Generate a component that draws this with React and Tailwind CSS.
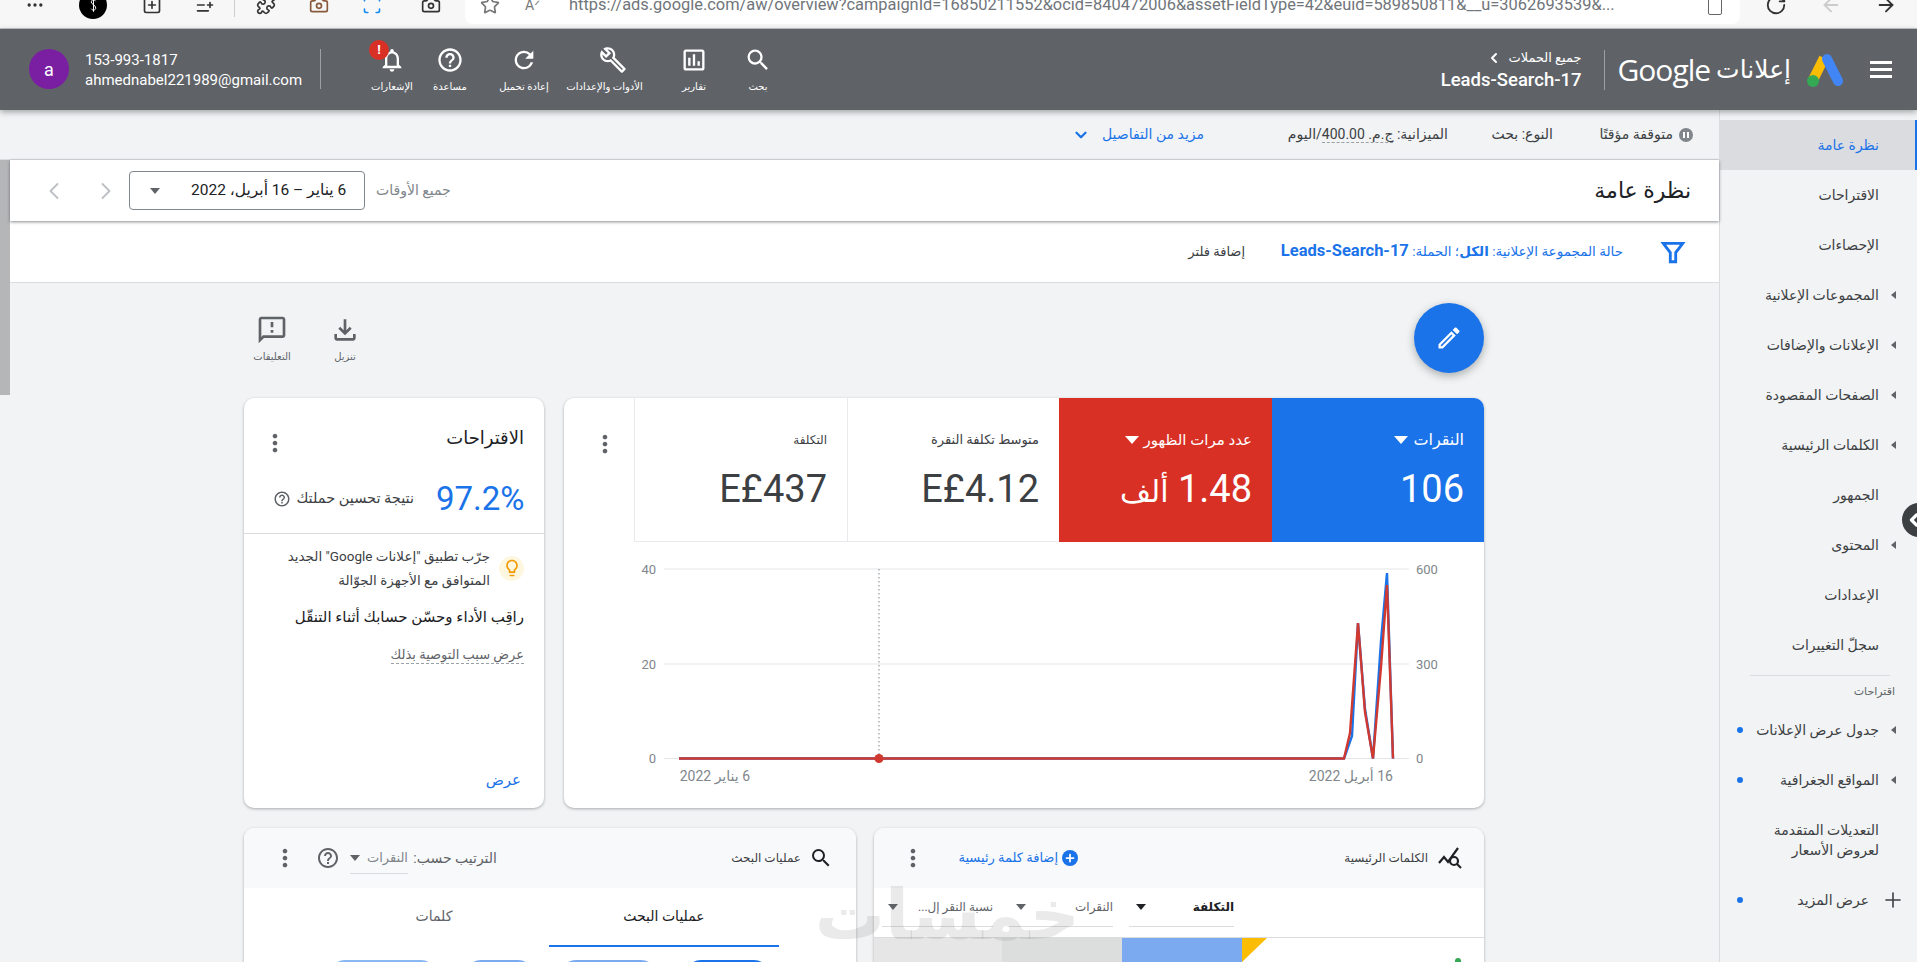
import React from "react";
import { Ellipsis, SquarePlus, ListPlus, Puzzle, Camera, Scan, RotateCw, ArrowLeft, ArrowRight, Star, ChevronLeft, ChevronRight, ChevronDown, Plus } from "lucide-react";

const P = {
  search: "M15.5 14h-.79l-.28-.27A6.471 6.471 0 0 0 16 9.5 6.5 6.5 0 1 0 9.5 16c1.61 0 3.09-.59 4.23-1.57l.27.28v.79l5 4.99L20.49 19l-4.99-5zm-6 0C7.01 14 5 11.99 5 9.5S7.01 5 9.5 5 14 7.01 14 9.5 11.99 14 9.5 14z",
  report: "M19 3H5c-1.1 0-2 .9-2 2v14c0 1.1.9 2 2 2h14c1.1 0 2-.9 2-2V5c0-1.1-.9-2-2-2zm0 16H5V5h14v14zM7 10h2v7H7zm4-3h2v10h-2zm4 6h2v4h-2z",
  wrench: "M22.61 18.99l-9.08-9.08c.93-2.34.45-5.1-1.44-7C9.79.61 6.21.4 3.66 2.25L7.5 6.1 6.08 7.5 2.25 3.67C.39 6.21.61 9.79 2.91 12.08c1.86 1.86 4.57 2.35 6.88 1.48l9.11 9.11c.39.39 1.02.39 1.41 0l2.3-2.3c.4-.38.4-1.01 0-1.38zm-3 1.6l-9.46-9.46c-.61.45-1.29.72-2 .82-1.36.2-2.79-.21-3.83-1.25C3.37 9.76 2.93 8.5 3 7.26l3.09 3.09 4.24-4.24-3.09-3.09c1.24-.07 2.49.37 3.44 1.31 1.08 1.08 1.49 2.57 1.24 3.96-.12.71-.42 1.37-.88 1.96l9.45 9.45-.88.89z",
  refresh: "M17.65 6.35A7.958 7.958 0 0 0 12 4c-4.42 0-7.99 3.58-7.99 8s3.57 8 7.99 8c3.73 0 6.84-2.55 7.73-6h-2.08A5.99 5.99 0 0 1 12 18c-3.31 0-6-2.69-6-6s2.69-6 6-6c1.66 0 3.14.69 4.22 1.78L13 11h7V4l-2.35 2.35z",
  help: "M11 18h2v-2h-2v2zm1-16C6.48 2 2 6.48 2 12s4.48 10 10 10 10-4.48 10-10S17.52 2 12 2zm0 18c-4.41 0-8-3.59-8-8s3.59-8 8-8 8 3.59 8 8-3.59 8-8 8zm0-14c-2.21 0-4 1.79-4 4h2c0-1.1.9-2 2-2s2 .9 2 2c0 2-3 1.75-3 5h2c0-2.25 3-2.5 3-5 0-2.21-1.79-4-4-4z",
  bell: "M12 22c1.1 0 2-.9 2-2h-4c0 1.1.89 2 2 2zm6-6v-5c0-3.07-1.64-5.64-4.5-6.32V4c0-.83-.67-1.5-1.5-1.5s-1.5.67-1.5 1.5v.68C7.63 5.36 6 7.92 6 11v5l-2 2v1h16v-1l-2-2zm-2 1H8v-6c0-2.48 1.51-4.5 4-4.5s4 2.02 4 4.5v6z",
  edit: "M14.06 9.02l.92.92L5.92 19H5v-.92l9.06-9.06M17.66 3c-.25 0-.51.1-.7.29l-1.83 1.83 3.75 3.75 1.83-1.83c.39-.39.39-1.02 0-1.41l-2.34-2.34c-.2-.2-.45-.29-.71-.29zm-3.6 3.19L3 17.25V21h3.75L17.81 9.94l-3.75-3.75z",
  feedback: "M20 2H4c-1.1 0-1.99.9-1.99 2L2 22l4-4h14c1.1 0 2-.9 2-2V4c0-1.1-.9-2-2-2zm0 14H5.17L4 17.17V4h16v12zm-9-4h2v2h-2zm0-6h2v4h-2z",
  download: "M18 15v3H6v-3H4v3c0 1.1.9 2 2 2h12c1.1 0 2-.9 2-2v-3h-2zm-1-4l-1.41-1.41L13 12.17V4h-2v8.17L8.41 9.59 7 11l5 5 5-5z",
  kebab: "M12 8c1.1 0 2-.9 2-2s-.9-2-2-2-2 .9-2 2 .9 2 2 2zm0 2c-1.1 0-2 .9-2 2s.9 2 2 2 2-.9 2-2-.9-2-2-2zm0 6c-1.1 0-2 .9-2 2s.9 2 2 2 2-.9 2-2-.9-2-2-2z",
  bulb: "M9 21c0 .55.45 1 1 1h4c.55 0 1-.45 1-1v-1H9v1zm3-19C8.14 2 5 5.14 5 9c0 2.38 1.19 4.47 3 5.74V17c0 .55.45 1 1 1h6c.55 0 1-.45 1-1v-2.26c1.81-1.27 3-3.36 3-5.74 0-3.86-3.14-7-7-7zm2.85 11.1l-.85.6V16h-4v-2.3l-.85-.6A4.997 4.997 0 0 1 7 9c0-2.76 2.24-5 5-5s5 2.24 5 5c0 1.63-.8 3.16-2.15 4.1z",
};

function Mi({ d, className }) {
  return (
    <svg viewBox="0 0 24 24" className={className} fill="currentColor">
      <path d={d} />
    </svg>
  );
}

function Arrow({ className }) {
  return <span className={"inline-block w-0 h-0 border-l-[5px] border-r-[5px] border-t-[6px] border-l-transparent border-r-transparent " + className} />;
}

function NavItem({ w, icon, label, badge, labelClass = "" }) {
  return (
    <div className={"relative flex flex-col items-center pt-[17px] " + w}>
      <Mi d={icon} className="w-[28px] h-[28px] text-white" />
      <span className={"mt-[7px] text-[10px] leading-[12px] text-white whitespace-nowrap " + labelClass}>{label}</span>
      {badge && (
        <span className="absolute left-[9px] top-[11px] w-[20px] h-[20px] rounded-full bg-[#d93025] text-white text-[13px] font-bold leading-[20px] text-center">!</span>
      )}
    </div>
  );
}

function BrowserBar() {
  const cls = "w-[20px] h-[20px] text-[#333]";
  return (
    <div className="h-[29px] bg-[#f7f7f7] border-b border-[#c4c6c8] overflow-hidden flex items-start">
      <div className="h-[10px] flex items-center pl-[25px] w-[465px] shrink-0">
        <Ellipsis className={cls} />
        <span className="ml-[34px] w-[28px] h-[28px] rounded-full bg-black flex items-center justify-center shrink-0">
          <svg viewBox="0 0 12 20" className="w-[9px] h-[18px]" fill="none" stroke="#fff" strokeWidth="1.3">
            <path d="M6 1V19M9 5C7 2 3 3 3 6C3 9 9 10 9 14C9 17 5 18 3 15" />
          </svg>
        </span>
        <SquarePlus className={cls + " ml-[35px]"} />
        <ListPlus className={cls + " ml-[33px]"} />
        <span className="ml-[19px] w-px h-[24px] bg-[#ccc]" />
        <Puzzle className={cls + " ml-[21px]"} />
        <Camera className="w-[20px] h-[20px] ml-[33px] text-[#8a5a3c]" />
        <Scan className="w-[20px] h-[20px] ml-[33px] text-[#1a8cf0]" />
        <Camera className={cls + " ml-[39px]"} />
      </div>
      <div className="w-[1275px] shrink-0 h-[24px] bg-white rounded-b-lg flex items-start overflow-hidden">
        <div className="h-[10px] flex items-center pl-[15px] w-full">
          <Star className="w-[20px] h-[20px] text-[#777] shrink-0" />
          <span className="ml-[25px] text-[14px] text-[#777]">Aᐟ</span>
          <span className="ml-[29px] text-[16.4px] text-[#70757a] whitespace-nowrap">https://ads.google.com/aw/overview?campaignId=16850211552&ocid=840472006&assetFieldType=42&euid=589850811&__u=3062693539&...</span>
          <span className="ml-auto mr-[18px] w-[14px] h-[20px] border border-[#666] rounded-[2px] shrink-0" />
        </div>
      </div>
      <div className="h-[10px] flex items-center flex-1">
        <RotateCw className="ml-[25px] w-[22px] h-[22px] text-[#333]" />
        <ArrowLeft className="ml-[33px] w-[22px] h-[22px] text-[#ccc]" />
        <ArrowRight className="ml-[33px] w-[22px] h-[22px] text-[#333]" />
      </div>
    </div>
  );
}

function Header() {
  return (
    <div className="relative z-20 h-[81px] bg-[#5f6368] shadow-[0_2px_6px_rgba(60,64,67,0.45)] flex justify-between text-white">
      <div className="flex items-start">
        <div className="ml-[29px] mt-[20px] w-[40px] h-[40px] rounded-full bg-[#7b1fa2] flex items-center justify-center text-[18px]">a</div>
        <div className="ml-[16px] w-[218px] mt-[21px] text-[15px] leading-[20px]">
          <div>153-993-1817</div>
          <div>ahmednabel221989@gmail.com</div>
        </div>
        <div className="ml-[17px] mt-[20px] w-px h-[40px] bg-[#9aa0a6]" />
        <div className="ml-[39px] flex">
          <NavItem w="w-[64px]" icon={P.bell} label="الإشعارات" badge />
          <NavItem w="w-[52px]" icon={P.help} label="مساعدة" />
          <NavItem w="w-[96px]" icon={P.refresh} label="إعادة تحميل" />
          <NavItem w="w-[82px]" icon={P.wrench} label="الأدوات والإعدادات" labelClass="mr-[17px]" />
          <NavItem w="w-[80px]" icon={P.report} label="تقارير" />
          <NavItem w="w-[48px]" icon={P.search} label="بحث" />
        </div>
      </div>
      <div dir="rtl" className="flex items-center">
        <div className="mr-[25px] flex flex-col gap-[4px] w-[22px]">
          <span className="h-[3px] bg-white" />
          <span className="h-[3px] bg-white" />
          <span className="h-[3px] bg-white" />
        </div>
        <svg viewBox="0 0 36 34" className="w-[36px] h-[34px] mr-[27px] shrink-0">
          <path d="M17 5 L6 27" stroke="#fbbc04" strokeWidth="10" />
          <circle cx="6" cy="28" r="6" fill="#34a853" />
          <path d="M20 6 L31 28" stroke="#4285f4" strokeWidth="10" strokeLinecap="round" />
        </svg>
        <span className="mr-[16px] text-[25px] whitespace-nowrap">إعلانات</span>
        <span dir="ltr" className="mr-[6px] text-[30px] font-['Open_Sans',sans-serif] tracking-[-1px]">Google</span>
        <div className="mr-[12px] w-px h-[40px] bg-[#9aa0a6]" />
        <div className="mr-[23px] w-[190px]">
          <div className="flex items-center gap-[6px] text-[13px] leading-[20px]">
            جميع الحملات <ChevronLeft className="w-[16px] h-[16px]" strokeWidth={3} />
          </div>
          <div dir="ltr" className="text-right text-[18.5px] font-medium leading-[24px]">Leads-Search-17</div>
        </div>
      </div>
    </div>
  );
}

function Status() {
  return (
    <div dir="rtl" className="h-[50px] bg-[#f1f3f4] border-b border-[#dadce0] flex items-center text-[14px] text-[#3c4043] pr-[26px]">
      <span className="w-[14px] h-[14px] rounded-full bg-[#80868b] flex items-center justify-center gap-[2px] shrink-0">
        <i className="w-[2px] h-[6px] bg-white" />
        <i className="w-[2px] h-[6px] bg-white" />
      </span>
      <span className="mr-[6px] w-[120px] whitespace-nowrap">متوقفة مؤقتًا</span>
      <span className="w-[105px] whitespace-nowrap">النوع: بحث</span>
      <span className="w-[244px] whitespace-nowrap">الميزانية: <span className="border-b border-dashed border-[#9aa0a6]">ج.م. 400.00</span>/اليوم</span>
      <span className="w-[114px] text-[#1a73e8] whitespace-nowrap">مزيد من التفاصيل</span>
      <ChevronDown className="w-[18px] h-[18px] text-[#1a73e8]" strokeWidth={3} />
    </div>
  );
}

function TitleRow() {
  return (
    <div className="relative z-10 ml-[10px] h-[61px] bg-white shadow-[0_1px_3px_rgba(60,64,67,0.6)] flex items-center">
      <ChevronLeft className="ml-[30px] w-[28px] h-[28px] text-[#bdc1c6]" strokeWidth={1.6} />
      <ChevronRight className="ml-[24px] w-[28px] h-[28px] text-[#bdc1c6]" strokeWidth={1.6} />
      <div className="ml-[9px] w-[236px] h-[39px] border border-[#80868b] rounded-[4px] flex items-center">
        <Arrow className="ml-[20px] border-t-[#5f6368]" />
        <span className="ml-[31px] text-[15.5px] text-[#202124] whitespace-nowrap" dir="rtl">6 يناير – 16 أبريل، 2022</span>
      </div>
      <span className="ml-[11px] text-[14px] text-[#80868b] whitespace-nowrap">جميع الأوقات</span>
      <span className="ml-auto mr-[28px] text-[22px] text-[#202124] whitespace-nowrap">نظرة عامة</span>
    </div>
  );
}

function FilterRow() {
  return (
    <div dir="rtl" className="ml-[10px] h-[62px] bg-white border-b border-[#dadce0] flex items-center pr-[33px]">
      <svg viewBox="0 0 24 24" className="w-[26px] h-[26px] text-[#1a73e8] shrink-0" fill="none" stroke="currentColor" strokeWidth="2.6">
        <path d="M3 4H21L14.5 12.5V21H9.5V12.5Z" />
      </svg>
      <div className="mr-[37px] w-[342px] text-[13.5px] text-[#1a73e8] whitespace-nowrap">
        حالة المجموعة الإعلانية: <b>الكل</b>؛ الحملة: <b className="text-[16.5px]">Leads-Search-17</b>
      </div>
      <span className="mr-[36px] text-[13px] text-[#3c4043] font-medium whitespace-nowrap">إضافة فلتر</span>
    </div>
  );
}

function Toolbar() {
  return (
    <div className="h-[115px] flex items-start justify-between">
      <div className="flex pt-[31px] text-[#5f6368]">
        <div className="ml-[-2px] w-[60px] flex flex-col items-center">
          <Mi d={P.feedback} className="w-[32px] h-[32px]" />
          <span className="mt-[3px] text-[10px] whitespace-nowrap">التعليقات</span>
        </div>
        <div className="ml-[13px] w-[60px] flex flex-col items-center">
          <Mi d={P.download} className="w-[32px] h-[32px]" />
          <span className="mt-[3px] text-[10px] whitespace-nowrap">تنزيل</span>
        </div>
      </div>
      <div className="mt-[20px] w-[70px] h-[70px] rounded-full bg-[#1a73e8] shadow-[0_3px_8px_rgba(60,64,67,0.4)] flex items-center justify-center">
        <Mi d={P.edit} className="w-[28px] h-[28px] text-white" />
      </div>
    </div>
  );
}

function Kebab({ className = "" }) {
  return <Mi d={P.kebab} className={"w-[28px] h-[28px] text-[#5f6368] shrink-0 " + className} />;
}

function SuggestCard() {
  return (
    <div dir="rtl" className="w-[300px] h-[410px] bg-white rounded-[10px] shadow-[0_1px_3px_rgba(60,64,67,0.4)] flex flex-col">
      <div className="flex justify-between items-start h-[62px] pt-[26px] pr-[20px] pl-[17px]">
        <span className="text-[18px] text-[#202124] whitespace-nowrap">الاقتراحات</span>
        <Kebab className="mt-[5px]" />
      </div>
      <div className="flex items-center pr-[20px] mt-[17px]">
        <span dir="ltr" className="text-[33px] leading-[44px] text-[#1a73e8] w-[88px] text-right whitespace-nowrap">97.2%</span>
        <span className="mr-[22px] text-[14.5px] text-[#3c4043] whitespace-nowrap">نتيجة تحسين حملتك</span>
        <Mi d={P.help} className="mr-[5px] w-[18px] h-[18px] text-[#5f6368] shrink-0" />
      </div>
      <div className="mt-[12px] border-t border-[#dadce0] pt-[10px] pr-[20px]">
        <div className="flex items-center">
          <span className="w-[25px] h-[25px] rounded-full bg-[#fef7e0] flex items-center justify-center shrink-0">
            <Mi d={P.bulb} className="w-[20px] h-[20px] text-[#f29900]" />
          </span>
          <div className="mr-[9px] text-[13.5px] leading-[24px] text-[#3c4043] whitespace-nowrap">
            <div>جرّب تطبيق "إعلانات Google" الجديد</div>
            <div>المتوافق مع الأجهزة الجوّالة</div>
          </div>
        </div>
        <div className="mt-[14px] text-[15px] leading-[22px] font-medium text-[#202124] whitespace-nowrap">راقِب الأداء وحسّن حسابك أثناء التنقّل</div>
        <div className="mt-[18px] text-[13px] leading-[18px] text-[#5f6368]">
          <span className="border-b border-dashed border-[#9aa0a6] pb-[1px] whitespace-nowrap">عرض سبب التوصية بذلك</span>
        </div>
      </div>
      <div className="mt-auto mb-[20px] pr-[23px] text-[15px] leading-[16px] text-[#1a73e8]">عرض</div>
    </div>
  );
}

function Tile({ bg, label, value, w, arrow, light, labelClass }) {
  return (
    <div dir="rtl" className={"h-[144px] pt-[32px] pr-[20px] " + w + " " + bg + " " + (light ? "text-[#3c4043] border-l border-b border-[#e8eaed]" : "text-white")}>
      <div className={"flex items-center gap-[5px] leading-[20px] whitespace-nowrap " + labelClass}>
        {label}
        {arrow && <span className="inline-block w-0 h-0 border-x-[7px] border-x-transparent border-t-[8px] border-t-white" />}
      </div>
      <div className="mt-[16px] text-[38px] leading-[46px] whitespace-nowrap">{value}</div>
    </div>
  );
}

function Chart() {
  const grid = [27, 122, 216.5];
  return (
    <svg viewBox="0 0 920 266" className="w-[920px] h-[266px] block">
      {grid.map((y) => (
        <line key={y} x1="100" x2="845" y1={y} y2={y} stroke="#e4e6e8" strokeWidth="1.2" />
      ))}
      <g fill="#80868b" fontSize="13">
        <text x="92" y="32" textAnchor="end">40</text>
        <text x="92" y="127" textAnchor="end">20</text>
        <text x="92" y="221" textAnchor="end">0</text>
        <text x="852" y="32">600</text>
        <text x="852" y="127">300</text>
        <text x="852" y="221">0</text>
        <text x="186" y="239" textAnchor="start" direction="rtl" fontSize="14">6 يناير 2022</text>
        <text x="829" y="239" textAnchor="start" direction="rtl" fontSize="14">16 أبريل 2022</text>
      </g>
      <line x1="315" x2="315" y1="27" y2="216" stroke="#80868b" strokeWidth="1" strokeDasharray="1.5 2.5" />
      <polyline points="115,216.5 780,216.5 788,194 794,81 801,167 809,216.5 817,99 823,31 829,216.5" fill="none" stroke="#1a73e8" strokeWidth="2.4" />
      <polyline points="115,216.5 780,216.5 786,191 794,81 801,170 809,216.5 817,125 823,43 829,216.5" fill="none" stroke="#d0392f" strokeWidth="2.4" />
      <circle cx="315" cy="216.5" r="4.5" fill="#d0392f" />
    </svg>
  );
}

function MetricsCard() {
  return (
    <div className="w-[920px] h-[410px] bg-white rounded-[10px] shadow-[0_1px_3px_rgba(60,64,67,0.4)] overflow-hidden">
      <div className="flex h-[144px]">
        <div className="w-[70px] flex justify-center pt-[32px] pl-[12px]">
          <Kebab />
        </div>
        <Tile w="w-[213px]" bg="bg-white" label="التكلفة" value="E£437" light labelClass="text-[12px]" />
        <Tile w="w-[212px]" bg="bg-white" label="متوسط تكلفة النقرة" value="E£4.12" light labelClass="text-[13px]" />
        <Tile w="w-[213px]" bg="bg-[#d93025]" label="عدد مرات الظهور" value={<>1.48 <span className="text-[30px]">ألف</span></>} arrow labelClass="text-[15px]" />
        <Tile w="w-[212px]" bg="bg-[#1a73e8]" label="النقرات" value="106" arrow labelClass="text-[16px]" />
      </div>
      <Chart />
    </div>
  );
}

function SearchCard() {
  return (
    <div dir="rtl" className="w-[612px] h-[200px] bg-white rounded-t-[10px] shadow-[0_1px_3px_rgba(60,64,67,0.4)] overflow-hidden">
      <div className="h-[60px] bg-[#f8f9fa] flex items-center pr-[23px] text-[12px] text-[#3c4043]">
        <Mi d={P.search} className="w-[24px] h-[24px] text-[#202124] shrink-0" />
        <span className="mr-[8px] w-[112px] whitespace-nowrap">عمليات البحث</span>
        <span className="mr-[192px] w-[84px] text-[14px] text-[#5f6368] whitespace-nowrap">الترتيب حسب:</span>
        <span className="mr-[5px] w-[58px] h-[32px] border-b border-[#dadce0] flex items-center justify-between text-[13px] text-[#80868b] whitespace-nowrap">
          النقرات <Arrow className="border-t-[#5f6368]" />
        </span>
        <Mi d={P.help} className="mr-[10px] w-[24px] h-[24px] text-[#5f6368] shrink-0" />
        <Kebab className="mr-[17px]" />
      </div>
      <div className="flex pr-[77px] text-[14px] text-center">
        <div className="w-[230px] h-[59px] leading-[56px] font-medium text-[#202124] border-b-[2px] border-[#1a73e8]">عمليات البحث</div>
        <div className="w-[230px] h-[59px] leading-[56px] font-medium text-[#5f6368]">كلمات</div>
      </div>
      <div className="flex pr-[86px] mt-[13px]">
        <span className="w-[85px] h-[16px] rounded-t-full bg-[#1a73e8]" />
        <span className="mr-[28px] w-[97px] h-[16px] rounded-t-full bg-[#7baaf0]" />
        <span className="mr-[26px] w-[69px] h-[16px] rounded-t-full bg-[#7baaf0]" />
        <span className="mr-[28px] w-[108px] h-[16px] rounded-t-full bg-[#8ab8f2]" />
      </div>
    </div>
  );
}

function KeywordCard() {
  return (
    <div dir="rtl" className="w-[610px] h-[200px] bg-white rounded-t-[10px] shadow-[0_1px_3px_rgba(60,64,67,0.4)] overflow-hidden">
      <div className="h-[60px] bg-[#f8f9fa] flex items-center pr-[20px] text-[12px] text-[#3c4043]">
        <svg viewBox="0 0 26 24" className="w-[26px] h-[24px] text-[#202124] shrink-0" fill="none" stroke="currentColor" strokeWidth="2.2">
          <path d="M1 17L6 11L10 16L20 2" />
          <circle cx="16" cy="15" r="4" />
          <path d="M19 18L23 22" />
        </svg>
        <span className="mr-[10px] w-[98px] whitespace-nowrap">الكلمات الرئيسية</span>
        <span className="mr-[252px] w-[16px] h-[16px] rounded-full bg-[#1a73e8] flex items-center justify-center shrink-0">
          <Plus className="w-[12px] h-[12px] text-white" strokeWidth={3.5} />
        </span>
        <span className="mr-[4px] w-[116px] text-[13px] text-[#1a73e8] whitespace-nowrap">إضافة كلمة رئيسية</span>
        <Kebab className="mr-[15px]" />
      </div>
      <div className="h-[50px] border-b border-[#dadce0] flex pr-[250px] text-[12px]">
        <div className="w-[105px] h-[39px] border-b border-[#dadce0] flex items-center justify-between font-bold text-[#202124] shrink-0">
          التكلفة <Arrow className="border-t-[#202124] ml-[7px]" />
        </div>
        <div className="mr-[16px] w-[104px] h-[39px] border-b border-[#dadce0] flex items-center justify-between text-[#5f6368] shrink-0">
          النقرات <Arrow className="border-t-[#5f6368] ml-[7px]" />
        </div>
        <div className="mr-[16px] w-[111px] h-[39px] border-b border-[#dadce0] flex items-center justify-between text-[#5f6368] shrink-0">
          نسبة النقر إل... <Arrow className="border-t-[#5f6368] ml-[6px]" />
        </div>
      </div>
      <div className="flex h-[90px]">
        <div className="w-[217px] relative">
          <span className="absolute right-[23px] top-[20px] w-[6px] h-[6px] rounded-full bg-[#34a853]" />
        </div>
        <svg viewBox="0 0 25 24" className="w-[25px] h-[24px] shrink-0"><path d="M0 0H25L0 24Z" fill="#fbbc04" /></svg>
        <div className="w-[120px] bg-[#7baaf0]" />
        <div className="w-[120px] bg-[#dcdddd]" />
        <div className="w-[128px] bg-[#e6e6e6]" />
      </div>
    </div>
  );
}

const NAV = [
  ["نظرة عامة", false, true],
  ["الاقتراحات"],
  ["الإحصاءات"],
  ["المجموعات الإعلانية", true],
  ["الإعلانات والإضافات", true],
  ["الصفحات المقصودة", true],
  ["الكلمات الرئيسية", true],
  ["الجمهور"],
  ["المحتوى", true],
  ["الإعدادات"],
  ["سجلّ التغييرات"],
];

function SideCaret({ show, w = "w-[38px]" }) {
  return (
    <span className={w + " shrink-0 flex justify-center pr-[10px]"}>
      {show && <span className="w-0 h-0 border-y-[4px] border-y-transparent border-r-[5px] border-r-[#5f6368]" />}
    </span>
  );
}

function Sidebar() {
  return (
    <div dir="rtl" className="w-[198px] shrink-0 border-l border-[#dadce0] bg-[#f1f3f4] pt-[10px] text-[14px] text-[#3c4043]">
      {NAV.map(([t, caret, active]) => (
        <div key={t} className={"h-[50px] flex items-center whitespace-nowrap " + (active ? "bg-[#dadce0] text-[#1a73e8] border-r-[2px] border-[#1a73e8]" : "")}>
          <SideCaret show={caret} w={active ? "w-[36px]" : "w-[38px]"} />
          {t}
        </div>
      ))}
      <div className="mt-[5px] ml-[30px] mr-[27px] border-t border-[#dadce0]" />
      <div className="mt-[8px] pr-[22px] text-[11px] leading-[16px] text-[#5f6368]">اقتراحات</div>
      <div className="h-[50px] flex items-center whitespace-nowrap mt-[5px]">
        <SideCaret show />
        جدول عرض الإعلانات
        <span className="mr-auto ml-[17px] w-[6px] h-[6px] rounded-full bg-[#1a73e8]" />
      </div>
      <div className="h-[50px] flex items-center whitespace-nowrap">
        <SideCaret show />
        المواقع الجغرافية
        <span className="mr-auto ml-[17px] w-[6px] h-[6px] rounded-full bg-[#1a73e8]" />
      </div>
      <div className="h-[70px] flex items-center">
        <SideCaret />
        <div className="leading-[20px] whitespace-nowrap">التعديلات المتقدمة<br />لعروض الأسعار</div>
      </div>
      <div className="h-[50px] flex items-center whitespace-nowrap">
        <span className="w-[48px] shrink-0 flex justify-center">
          <Plus className="w-[24px] h-[24px] text-[#3c4043]" strokeWidth={1.6} />
        </span>
        عرض المزيد
        <span className="mr-auto ml-[17px] w-[6px] h-[6px] rounded-full bg-[#1a73e8]" />
      </div>
    </div>
  );
}

export default function App() {
  return (
    <div className="relative w-[1917px] h-[962px] overflow-hidden bg-[#f1f3f4] font-[Roboto,'DejaVu_Sans',sans-serif]">
      <BrowserBar />
      <Header />
      <div className="flex">
        <div className="flex-1 min-w-0">
          <Status />
          <TitleRow />
          <FilterRow />
          <div className="ml-[244px] w-[1240px]">
            <Toolbar />
            <div className="flex gap-[20px]">
              <SuggestCard />
              <MetricsCard />
            </div>
            <div className="flex gap-[18px] mt-[20px]">
              <SearchCard />
              <KeywordCard />
            </div>
          </div>
        </div>
        <Sidebar />
      </div>
      <div className="absolute left-0 top-[160px] w-[10px] h-[235px] bg-[#b4b6b8]" />
      <div className="absolute left-[1902px] top-[503px] w-[34px] h-[34px] rounded-full bg-[#3c4043] flex items-center pl-[2px]">
        <ChevronLeft className="w-[20px] h-[20px] text-white" strokeWidth={4} />
      </div>
      <div dir="rtl" className="absolute left-[840px] top-[873px] w-[240px] text-center text-[70px] leading-[84px] font-bold text-[rgba(90,90,90,0.13)] pointer-events-none">خمسات</div>
    </div>
  );
}
